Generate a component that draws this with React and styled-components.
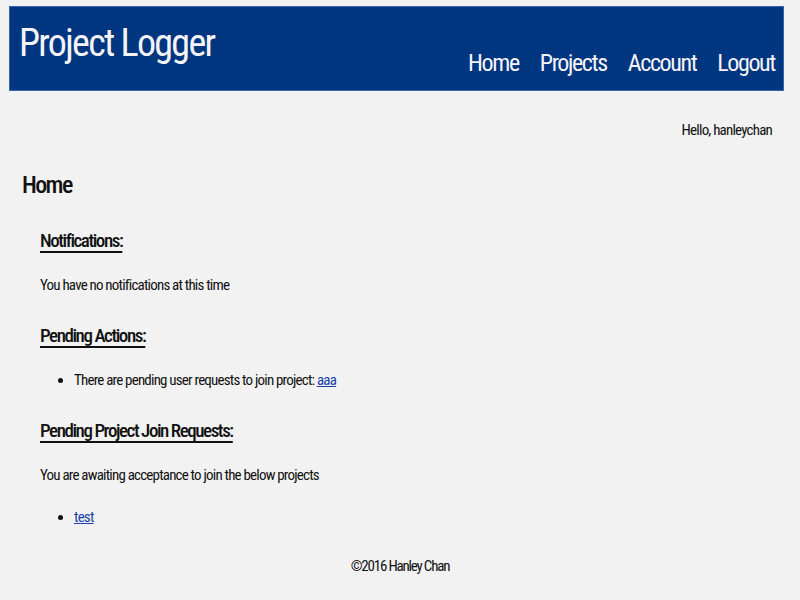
import React from "react";
import styled, { createGlobalStyle } from "styled-components";

const Global = createGlobalStyle`
  body {
    margin: 0;
    background: #f2f2f2;
    color: #111;
    font-family: "Roboto Condensed", "Liberation Sans Narrow", sans-serif;
  }
`;

const Header = styled.header`
  margin: 6px 16px 0 9px;
  height: 85px;
  box-sizing: border-box;
  background: #003580;
  border: 1px solid #3a64a8;
  display: flex;
  justify-content: space-between;
  padding: 0 8px 0 9px;
`;

const Title = styled.h1`
  margin: 0;
  padding-top: 14px;
  font-size: 38px;
  font-weight: 400;
  letter-spacing: -1.7px;
  color: #f4f4f8;
`;

const Nav = styled.nav`
  display: flex;
  align-items: flex-end;
  gap: 21px;
  padding-bottom: 13px;
`;

const NavLink = styled.a`
  color: #f4f4f8;
  font-size: 24px;
  letter-spacing: -1.4px;
  text-decoration: none;
`;

const Greeting = styled.div`
  text-align: right;
  padding: 30px 28px 0 0;
  font-size: 15px;
  letter-spacing: -0.8px;
`;

const Main = styled.main`
  padding: 0 22px;
`;

const PageTitle = styled.h2`
  margin: 32px 0 0;
  font-size: 24px;
  font-weight: 500;
  letter-spacing: -1.6px;
`;

const Section = styled.section`
  padding-left: 18px;
`;

const SectionTitle = styled.h3`
  margin: 30px 0 0;
  font-size: 19px;
  font-weight: 500;
  letter-spacing: -1.45px;
  text-decoration: underline;
  text-decoration-thickness: 2px;
  text-underline-offset: 4px;
`;

const Text = styled.p`
  margin: 24px 0 0;
  font-size: 15px;
  letter-spacing: -0.8px;
`;

const List = styled.ul`
  margin: 24px 0 0;
  padding-left: 34px;
  font-size: 15px;
  letter-spacing: -0.8px;
`;

const Link = styled.a`
  color: #1c3fa8;
  text-decoration: underline;
`;

const Footer = styled.footer`
  text-align: center;
  margin-top: 31px;
  font-size: 15px;
  letter-spacing: -1.2px;
`;

export default function App() {
  return (
    <>
      <Global />
      <Header>
        <Title>Project Logger</Title>
        <Nav>
          <NavLink href="#">Home</NavLink>
          <NavLink href="#">Projects</NavLink>
          <NavLink href="#">Account</NavLink>
          <NavLink href="#">Logout</NavLink>
        </Nav>
      </Header>
      <Greeting>Hello, hanleychan</Greeting>
      <Main>
        <PageTitle>Home</PageTitle>
        <Section>
          <SectionTitle>Notifications:</SectionTitle>
          <Text>You have no notifications at this time</Text>
        </Section>
        <Section>
          <SectionTitle>Pending Actions:</SectionTitle>
          <List>
            <li>
              There are pending user requests to join project: <Link href="#">aaa</Link>
            </li>
          </List>
        </Section>
        <Section>
          <SectionTitle>Pending Project Join Requests:</SectionTitle>
          <Text>You are awaiting acceptance to join the below projects</Text>
          <List>
            <li>
              <Link href="#">test</Link>
            </li>
          </List>
        </Section>
      </Main>
      <Footer>©2016 Hanley Chan</Footer>
    </>
  );
}
